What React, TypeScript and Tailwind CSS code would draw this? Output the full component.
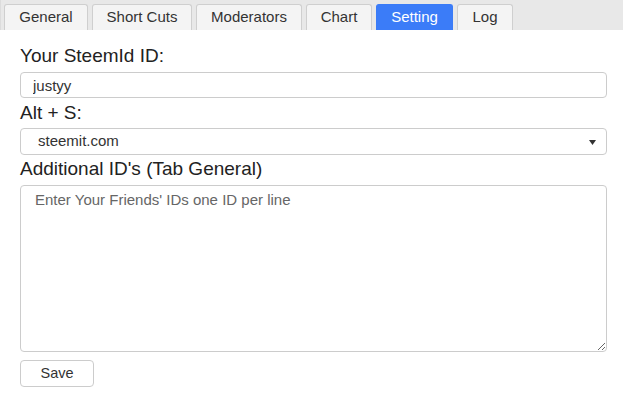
import React from "react";

const tabs = [
  { name: "General", w: "w-[84px]" },
  { name: "Short Cuts", w: "w-[100px]" },
  { name: "Moderators", w: "w-[106px]" },
  { name: "Chart", w: "w-[66px]" },
  { name: "Setting", w: "w-[77px]" },
  { name: "Log", w: "w-[56px]" },
];

export default function App() {
  return (
    <div className="h-[400px] w-[640px] bg-white font-['Liberation_Sans',Arial,sans-serif] text-[#333]">
      <div className="flex h-[30px] w-[623px] items-end gap-[4px] border-l border-[#dcdcdc] bg-[#e8e8e8] pl-[3px]">
        {tabs.map((t) => (
          <div
            key={t.name}
            className={`${t.w} flex h-[26px] items-center justify-center rounded-t-[3px] border border-b-0 text-[15px] ${
              t.name === "Setting"
                ? "border-[#3a7bf7] bg-[#3b7cf8] text-white"
                : "border-[#cfcfcf] bg-[#f4f4f4] text-[#333]"
            }`}
          >
            {t.name}
          </div>
        ))}
      </div>

      <div className="ml-5 w-[587px] pt-[15px]">
        <label className="block h-[22px] text-[19px] leading-[22px] text-[#222]">Your SteemId ID:</label>
        <input
          className="mt-[5px] block h-[26px] w-full rounded-[4px] border border-[#ccc] px-[12px] text-[15px] text-[#333] outline-none"
          defaultValue="justyy"
        />
        <label className="mt-[4px] block h-[22px] text-[19px] leading-[22px] text-[#222]">Alt + S:</label>
        <div className="relative mt-[4px] flex h-[27px] w-full items-center rounded-[4px] border border-[#ccc] pl-[17px] text-[15px] text-[#333]">
          steemit.com
          <svg className="absolute right-[10px] top-[11px]" width="7" height="5" viewBox="0 0 7 5">
            <path d="M0 0 H7 L3.5 5 Z" fill="#333" />
          </svg>
        </div>
        <label className="mt-[3px] block h-[22px] text-[19px] leading-[22px] text-[#222]">
          Additional ID's (Tab General)
        </label>
        <textarea
          className="mt-[5px] block h-[167px] w-full rounded-[4px] border border-[#ccc] px-[14px] py-[5px] text-[15px] leading-[18px] outline-none placeholder:text-[#666]"
          placeholder="Enter Your Friends' IDs one ID per line"
        />
        <button className="mt-[8px] block h-[27px] w-[74px] rounded-[4px] border border-[#ccc] bg-white text-[14.5px] text-[#333]">
          Save
        </button>
      </div>
    </div>
  );
}
